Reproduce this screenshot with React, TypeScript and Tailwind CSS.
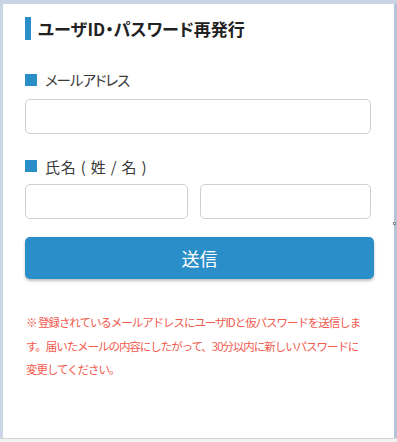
import React from 'react';

const jp = "font-['Noto_Sans_CJK_JP','Noto_Sans',sans-serif]";

const Label = ({ text, className = '' }: { text: string; className?: string }) => (
  <div className="flex items-center h-[20px]">
    <span className="w-[12px] h-[12px] bg-[#2a8ec8] shrink-0" />
    <span className={`ml-[8px] text-[#3a3a3a] leading-none ${className}`}>{text}</span>
  </div>
);

const Field = ({ className = '' }: { className?: string }) => (
  <input
    type="text"
    className={`h-[35px] rounded-[5px] border border-[#cfcfcf] bg-white outline-none ${className}`}
  />
);

export default function App() {
  return (
    <div className={`w-[397px] h-[442px] bg-[#c9d4e5] flex flex-col ${jp}`}>
      <div className="flex flex-1 pt-[4px] pl-[3px]">
        {/* Card */}
        <div className="relative w-[391px] h-[434px] bg-white pl-[22px] pr-[23px] pt-[13px]">
          {/* Header */}
          <div className="flex items-center h-[23px]">
            <span className="w-[6px] h-[23px] bg-[#2a8ec8]" />
            <h1 className="ml-[7px] text-[17px] font-bold text-[#222] leading-none [font-feature-settings:'palt']">ユーザID・パスワード再発行</h1>
          </div>

          <div className="mt-[30px]">
            <Label text="メールアドレス" className="text-[14.5px] [font-feature-settings:'palt'] tracking-[-1px]" />
          </div>
          <Field className="mt-[9px] w-full block" />

          <div className="mt-[22px]">
            <Label text="氏名 ( 姓 / 名 )" className="text-[15px] tracking-[0.8px]" />
          </div>
          <div className="mt-[8px] flex gap-[12px]">
            <Field className="w-[163px]" />
            <Field className="flex-1 min-w-0" />
          </div>

          <button className="mt-[18px] w-[349px] h-[42px] rounded-[5px] bg-[#2a8ec8] text-white text-[18px] shadow-[0_2px_3px_rgba(0,0,0,0.25)]">
            送信
          </button>

          <p className="mt-[32px] pl-[1px] text-[11.5px] tracking-[-1.05px] leading-[23.5px] text-[#f25a4e] whitespace-nowrap">
            ※ 登録されているメールアドレスにユーザIDと仮パスワードを送信しま<br />
            す。届いたメールの内容にしたがって、30分以内に新しいパスワードに<br />
            変更してください。
          </p>
        </div>
        <div className="w-[3px] bg-[#b7c4d8] relative">
          <span className="absolute left-[-1px] top-[218px] w-[3px] h-[3px] border border-[#888] bg-white" />
        </div>
      </div>
      <div className="h-[4px] border-t border-[#d4d4d4] bg-[#f2f2f2]" />
    </div>
  );
}
